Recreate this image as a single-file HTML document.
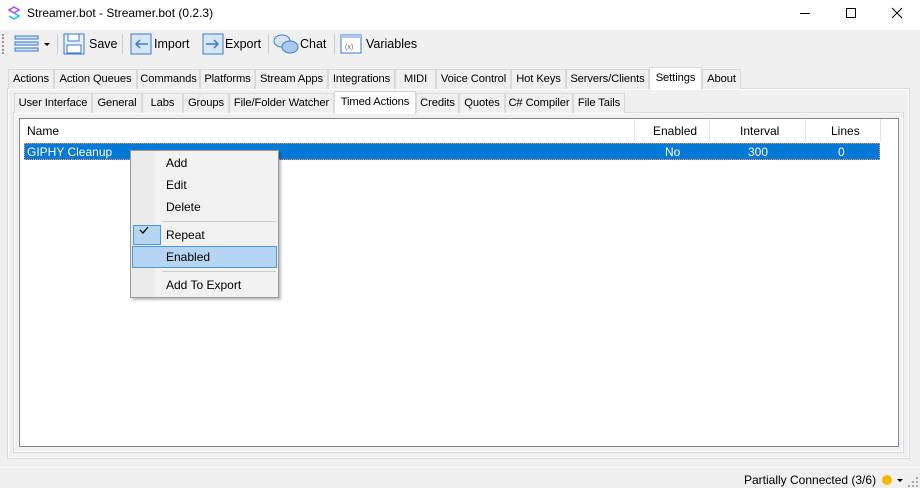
<!DOCTYPE html>
<html><head><meta charset="utf-8"><style>
*{margin:0;padding:0;box-sizing:border-box}
body{width:920px;height:488px;background:#f0f0f0;font-family:"Liberation Sans",sans-serif;font-size:12px;color:#000;position:relative;overflow:hidden}
.a{position:absolute;white-space:nowrap}
.tab{position:absolute;height:20px;border:1px solid #d9d9d9;border-bottom:none;background:#f0f0f0;text-align:center;line-height:19px;font-size:11.2px;white-space:nowrap;overflow:hidden;letter-spacing:-0.1px}
.tab.sel{background:#fff;border-color:#d9d9d9;z-index:2}
.mi{position:absolute;left:166px;font-size:12px}
.tb{font-size:12.5px}
</style></head><body>
<div class="a" style="left:0;top:0;width:920px;height:30px;background:#fff"></div>
<svg class="a" style="left:8px;top:6px" width="12" height="14" viewBox="0 0 12 14"><path d="M6 1 L11 4 L6 7 L1 4Z" fill="none" stroke="#a855f7" stroke-width="1.6"/><path d="M6 7 L11 10 L6 13 L1 10" fill="none" stroke="#22c1ee" stroke-width="1.6"/></svg>
<div class="a" style="left:27px;top:6px;font-size:12px">Streamer.bot - Streamer.bot (0.2.3)</div>
<div class="a" style="left:800px;top:13px;width:10px;height:1px;background:#000"></div>
<div class="a" style="left:846px;top:8px;width:10px;height:10px;border:1px solid #000"></div>
<svg class="a" style="left:891px;top:7px" width="12" height="12"><path d="M1 1L11 11M11 1L1 11" stroke="#000" stroke-width="1"/></svg>
<div class="a" style="left:2px;top:34px;width:2px;height:20px;border-left:2px dotted #999"></div>
<svg class="a" style="left:14px;top:35px" width="26" height="18"><g fill="#cfe3f7" stroke="#3d7ac9"><rect x="1" y="1" width="23" height="3"/><rect x="1" y="7" width="23" height="3"/><rect x="1" y="13" width="23" height="3"/></g></svg>
<div class="a" style="left:44px;top:43px;border-left:3px solid transparent;border-right:3px solid transparent;border-top:3px solid #000"></div>
<div class="a" style="left:57px;top:34px;width:1px;height:20px;background:#ccc"></div>
<svg class="a" style="left:63px;top:33px" width="22" height="22"><rect x="1" y="1" width="20" height="20" fill="#e8f0fa" stroke="#3d7ac9"/><rect x="5" y="1" width="11" height="7" fill="#fff" stroke="#3d7ac9"/><rect x="4" y="12" width="14" height="8" fill="#fff" stroke="#3d7ac9"/></svg>
<div class="a tb" style="left:89px;top:37px">Save</div>
<div class="a" style="left:122px;top:34px;width:1px;height:20px;background:#ccc"></div>
<svg class="a" style="left:130px;top:33px" width="22" height="22"><rect x="1" y="1" width="20" height="20" fill="#d6e6f7" stroke="#3d7ac9"/><path d="M18 11H6M10 7L6 11L10 15" stroke="#3d7ac9" fill="none" stroke-width="1.5"/></svg>
<div class="a tb" style="left:154px;top:37px">Import</div>
<svg class="a" style="left:202px;top:33px" width="22" height="22"><rect x="1" y="1" width="20" height="20" fill="#d6e6f7" stroke="#3d7ac9"/><path d="M4 11H16M12 7L16 11L12 15" stroke="#3d7ac9" fill="none" stroke-width="1.5"/></svg>
<div class="a tb" style="left:225px;top:37px">Export</div>
<div class="a" style="left:268px;top:34px;width:1px;height:20px;background:#ccc"></div>
<svg class="a" style="left:273px;top:33px" width="26" height="22"><ellipse cx="9" cy="8" rx="8" ry="6" fill="#d6e6f7" stroke="#3d7ac9"/><ellipse cx="17" cy="14" rx="8" ry="6" fill="#a9c9ec" stroke="#3d7ac9"/></svg>
<div class="a tb" style="left:300px;top:37px">Chat</div>
<div class="a" style="left:334px;top:34px;width:1px;height:20px;background:#ccc"></div>
<svg class="a" style="left:340px;top:34px" width="22" height="20"><rect x="1" y="1" width="20" height="18" fill="#fff" stroke="#3d7ac9"/><rect x="1" y="1" width="20" height="3" fill="#a9c9ec"/><text x="5" y="15" font-size="7" fill="#666" font-family="Liberation Sans">(x)</text></svg>
<div class="a tb" style="left:366px;top:37px">Variables</div>
<div class="a" style="left:7px;top:88px;width:903px;height:371px;background:#fff;border:1px solid #d9d9d9"></div>
<div class="a" style="left:9px;top:90px;width:899px;height:367px;background:#f0f0f0"></div>
<div class="tab" style="left:8px;top:69px;width:46px">Actions</div>
<div class="tab" style="left:54px;top:69px;width:83px">Action Queues</div>
<div class="tab" style="left:137px;top:69px;width:63px">Commands</div>
<div class="tab" style="left:200px;top:69px;width:55px">Platforms</div>
<div class="tab" style="left:255px;top:69px;width:73px">Stream Apps</div>
<div class="tab" style="left:328px;top:69px;width:67px">Integrations</div>
<div class="tab" style="left:395px;top:69px;width:41px">MIDI</div>
<div class="tab" style="left:436px;top:69px;width:75px">Voice Control</div>
<div class="tab" style="left:511px;top:69px;width:55px">Hot Keys</div>
<div class="tab" style="left:566px;top:69px;width:83px">Servers/Clients</div>
<div class="tab sel" style="left:649px;top:67px;width:53px;height:23px;line-height:20px">Settings</div>
<div class="tab" style="left:702px;top:69px;width:39px">About</div>
<div class="a" style="left:13px;top:112px;width:891px;height:341px;background:#fff;border:1px solid #d9d9d9"></div>
<div class="a" style="left:15px;top:114px;width:887px;height:337px;background:#f0f0f0"></div>
<div class="tab" style="left:14px;top:93px;width:78px">User Interface</div>
<div class="tab" style="left:92px;top:93px;width:50px">General</div>
<div class="tab" style="left:142px;top:93px;width:41px">Labs</div>
<div class="tab" style="left:183px;top:93px;width:46px">Groups</div>
<div class="tab" style="left:229px;top:93px;width:105px">File/Folder Watcher</div>
<div class="tab sel" style="left:334px;top:91px;width:82px;height:23px;line-height:20px">Timed Actions</div>
<div class="tab" style="left:416px;top:93px;width:43px">Credits</div>
<div class="tab" style="left:459px;top:93px;width:46px">Quotes</div>
<div class="tab" style="left:505px;top:93px;width:68px">C# Compiler</div>
<div class="tab" style="left:573px;top:93px;width:52px">File Tails</div>
<div class="a" style="left:19px;top:118px;width:880px;height:329px;background:#fff;border:1px solid #828790"></div>
<div class="a" style="left:20px;top:119px;width:878px;height:22px;background:#fff"></div>
<div class="a" style="left:27px;top:124px">Name</div>
<div class="a" style="left:634px;top:119px;width:1px;height:22px;background:#e5e5e5"></div>
<div class="a" style="left:709px;top:119px;width:1px;height:22px;background:#e5e5e5"></div>
<div class="a" style="left:805px;top:119px;width:1px;height:22px;background:#e5e5e5"></div>
<div class="a" style="left:880px;top:119px;width:1px;height:22px;background:#e5e5e5"></div>
<div class="a" style="left:653px;top:124px">Enabled</div>
<div class="a" style="left:740px;top:124px">Interval</div>
<div class="a" style="left:831px;top:124px">Lines</div>
<div class="a" style="left:24px;top:143px;width:856px;height:17px;background:#0078d7;border:1px dotted #f0a050"></div>
<div class="a" style="left:27px;top:145px;color:#fff">GIPHY Cleanup</div>
<div class="a" style="left:665px;top:145px;color:#fff">No</div>
<div class="a" style="left:748px;top:145px;color:#fff">300</div>
<div class="a" style="left:838px;top:145px;color:#fff">0</div>
<div class="a" style="left:130px;top:150px;width:149px;height:148px;background:#f2f2f2;border:1px solid #999;box-shadow:2px 2px 2px rgba(0,0,0,.25)"></div>
<div class="a" style="left:131px;top:151px;width:24px;height:146px;background:#ebebeb"></div>
<div class="mi" style="top:156px">Add</div>
<div class="mi" style="top:178px">Edit</div>
<div class="mi" style="top:200px">Delete</div>
<div class="a" style="left:162px;top:221px;width:114px;height:1px;background:#ccc"></div>
<div class="a" style="left:133px;top:225px;width:28px;height:20px;background:#b5d5f3;border:1px solid #4b97e0"></div>
<svg class="a" style="left:139px;top:225px" width="10" height="10"><path d="M1 5L4 8L9 2" stroke="#000" fill="none" stroke-width="1.3"/></svg>
<div class="mi" style="top:228px">Repeat</div>
<div class="a" style="left:132px;top:246px;width:145px;height:22px;background:#b5d5f3;border:1px solid #4b97e0"></div>
<div class="mi" style="top:250px">Enabled</div>
<div class="a" style="left:162px;top:271px;width:114px;height:1px;background:#ccc"></div>
<div class="mi" style="top:278px">Add To Export</div>
<div class="a" style="left:0;top:467px;width:920px;height:1px;background:#fafafa"></div>
<div class="a" style="left:744px;top:473px">Partially Connected (3/6)</div>
<div class="a" style="left:882px;top:475px;width:10px;height:10px;border-radius:50%;background:#f7b900"></div>
<div class="a" style="left:897px;top:479px;border-left:3px solid transparent;border-right:3px solid transparent;border-top:3px solid #000"></div>
<svg class="a" style="left:907px;top:475px" width="12" height="12"><g fill="#aaa"><rect x="9" y="2" width="2" height="2"/><rect x="5" y="6" width="2" height="2"/><rect x="9" y="6" width="2" height="2"/><rect x="1" y="10" width="2" height="2"/><rect x="5" y="10" width="2" height="2"/><rect x="9" y="10" width="2" height="2"/></g></svg>
</body></html>
